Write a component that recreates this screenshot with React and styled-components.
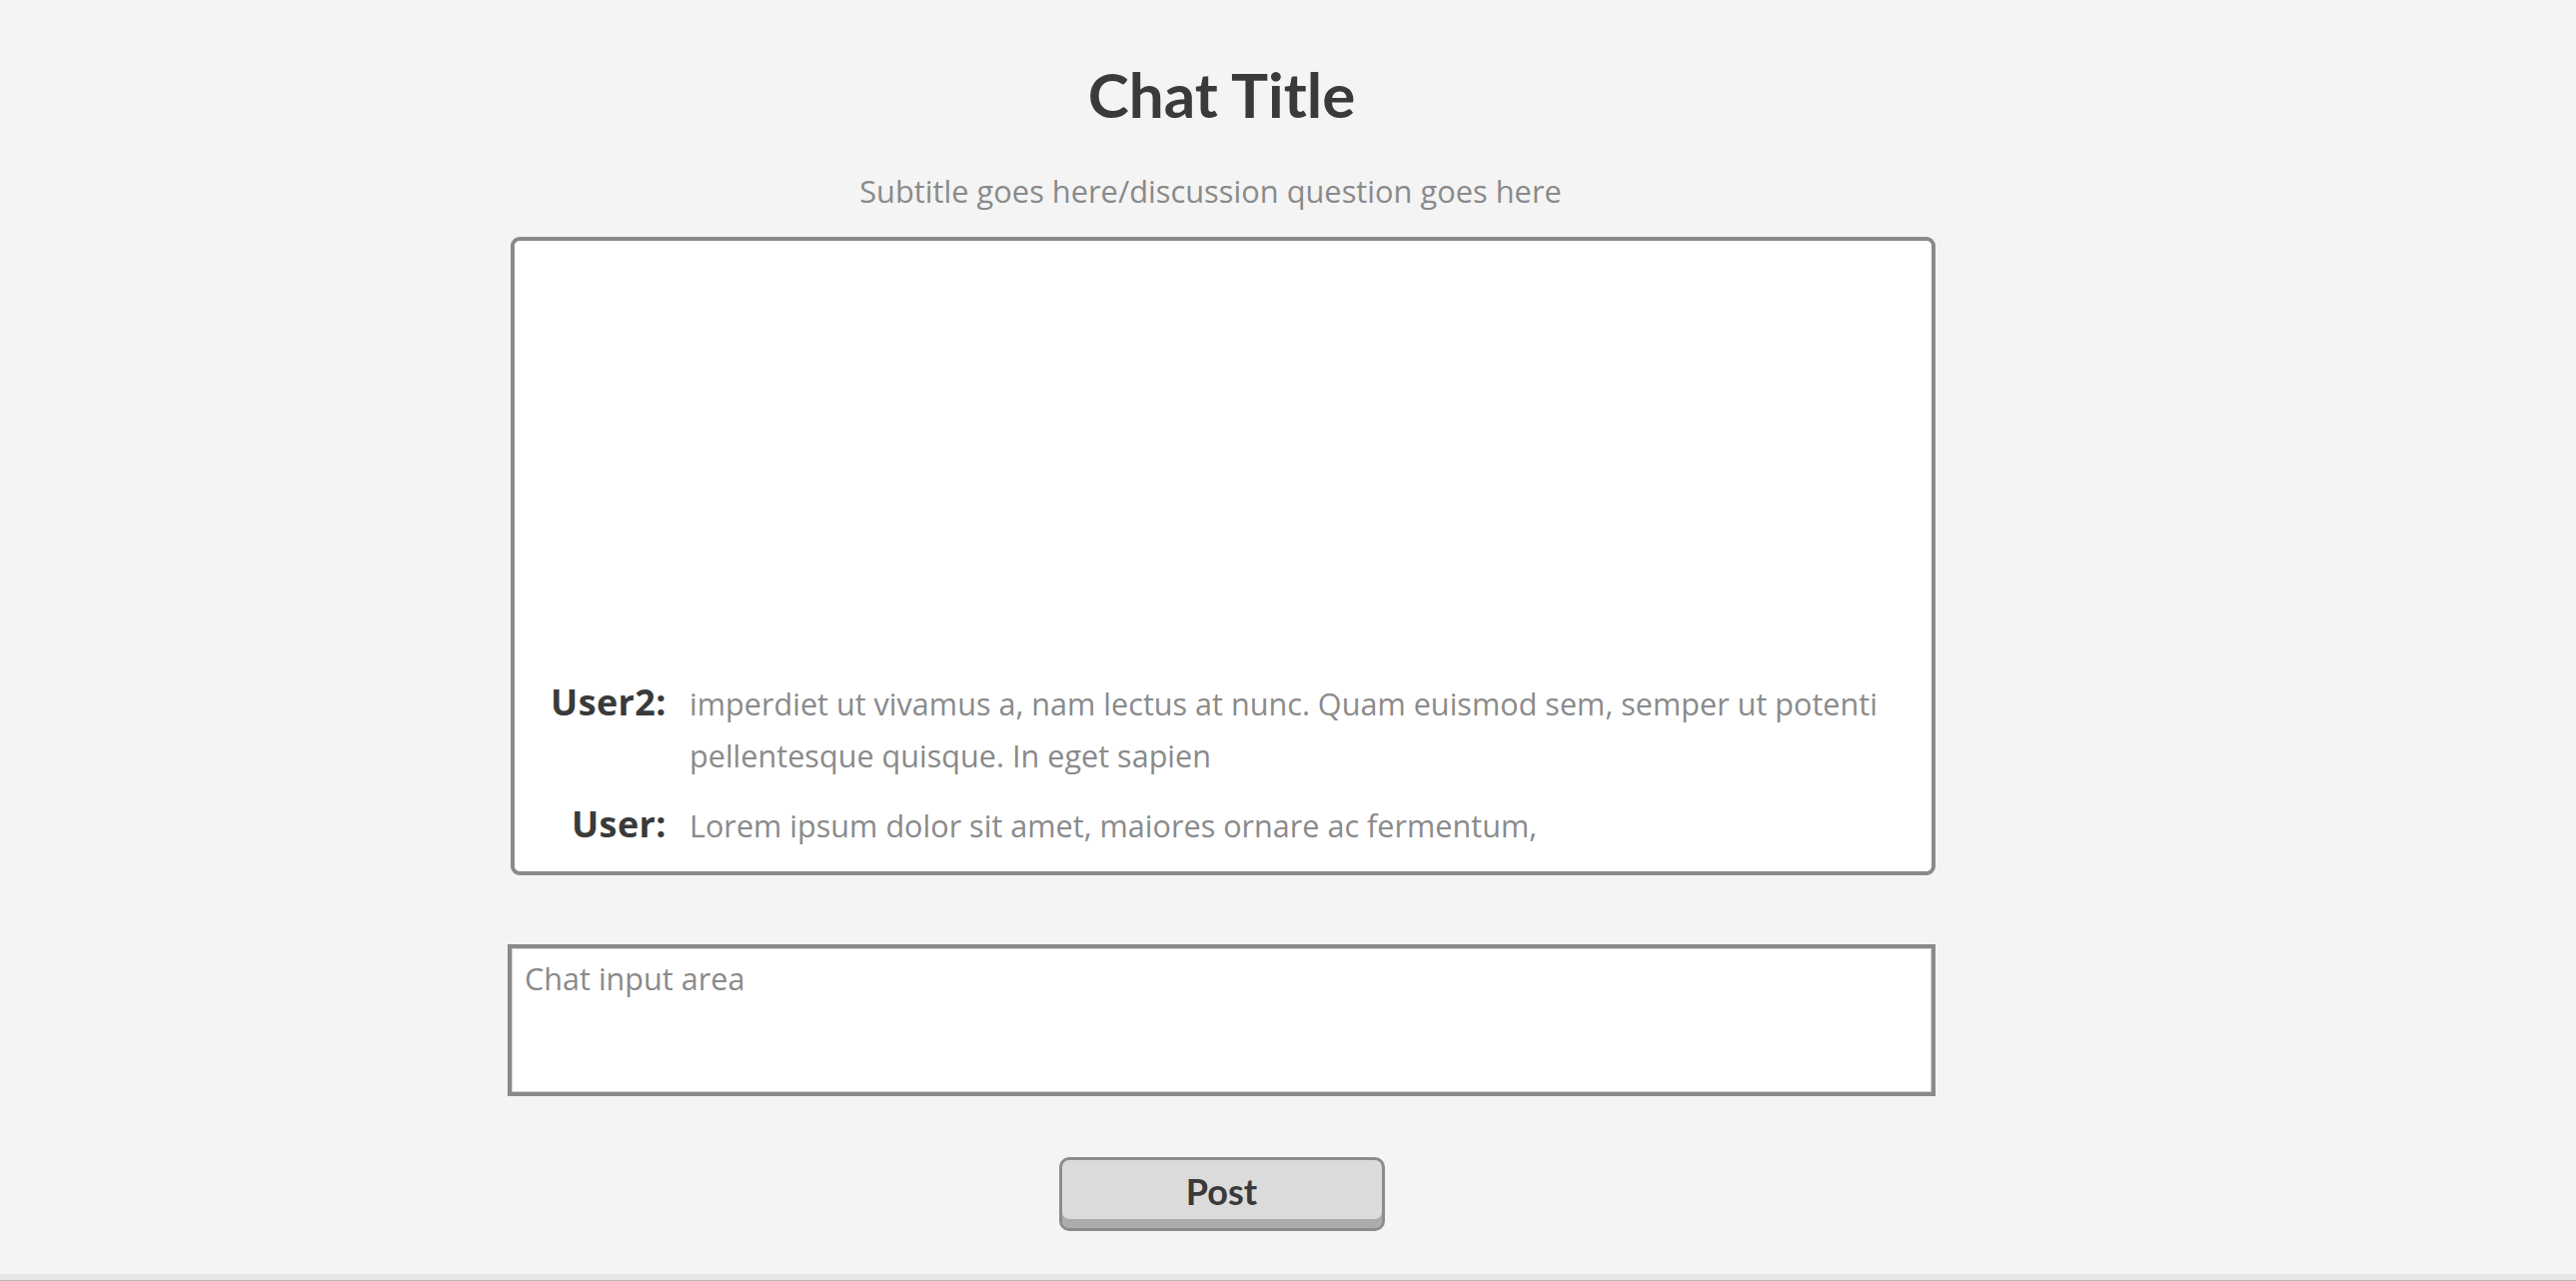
import styled, { createGlobalStyle } from "styled-components";

const GlobalStyle = createGlobalStyle`
    html, body {
        margin: 0;
        padding: 0;
        background: #f4f4f4;
    }
    * {
        box-sizing: border-box;
    }
`;

const bodyFont = `"Open Sans", Lato, sans-serif`;

const Page = styled.div`
    height: 1282px;
    padding: 57px 133px 0 0;
    display: flex;
    flex-direction: column;
    align-items: center;
    font-family: Lato, "Open Sans", sans-serif;
    box-shadow: inset 0 -1px 0 #b8b8b8, inset 0 -7px 0 #e6e6e6;
`;

const Column = styled.div`
    width: 1429px;
    display: flex;
    flex-direction: column;
    align-items: center;
`;

const Title = styled.h1`
    margin: 0;
    font-size: 62px;
    line-height: 74px;
    font-weight: 700;
    color: #3a3a3a;
`;

const Subtitle = styled.p`
    margin: 42px 0 0;
    padding-right: 22px;
    font-family: ${bodyFont};
    font-size: 30.8px;
    line-height: 36px;
    color: #8a8a8a;
`;

const ChatBox = styled.div`
    align-self: flex-end;
    width: 1426px;
    height: 639px;
    margin-top: 28px;
    background: #fff;
    border: 4px solid #8a8a8a;
    border-radius: 9px;
    padding: 0 40px 20px 19px;
    display: flex;
    flex-direction: column;
    justify-content: flex-end;
    gap: 18px;
`;

const Message = styled.div`
    display: grid;
    grid-template-columns: 133px 1fr;
    column-gap: 23px;
    align-items: baseline;
`;

const Author = styled.span`
    text-align: right;
    font-family: ${bodyFont};
    font-size: 36px;
    font-weight: 700;
    letter-spacing: 0.4px;
    color: #3a3a3a;
`;

const Text = styled.span`
    font-family: ${bodyFont};
    font-size: 30.6px;
    line-height: 52px;
    color: #8a8a8a;
`;

const ChatInput = styled.textarea`
    width: 1429px;
    height: 152px;
    margin-top: 69px;
    padding: 12px 13px;
    resize: none;
    background: #fff;
    border: 4px solid #8a8a8a;
    box-shadow: inset 0 0 0 1px #d2d2d2;
    outline: none;
    font-family: ${bodyFont};
    font-size: 30.6px;
    line-height: 36px;
    color: #555;

    &::placeholder {
        color: #8a8a8a;
    }
`;

const PostButton = styled.button`
    width: 326px;
    height: 74px;
    margin-top: 61px;
    background: #dbdbdb;
    border: 3px solid #8c8c8c;
    border-radius: 10px;
    box-shadow: inset 0 -9px 0 #acacac;
    padding: 0 0 6px;
    font-family: Lato, "Open Sans", sans-serif;
    font-size: 36px;
    font-weight: 700;
    color: #3a3a3a;
    cursor: pointer;
`;

const messages = [
    {
        user: "User2:",
        text: "imperdiet ut vivamus a, nam lectus at nunc. Quam euismod sem, semper ut potenti pellentesque quisque. In eget sapien",
    },
    {
        user: "User:",
        text: "Lorem ipsum dolor sit amet, maiores ornare ac fermentum,",
    },
];

function App() {
    return (
        <>
            <GlobalStyle />
            <Page>
                <Column>
                    <Title>Chat Title</Title>
                    <Subtitle>Subtitle goes here/discussion question goes here</Subtitle>
                    {/* CHAT LOG */}
                    <ChatBox>
                        {messages.map((m) => (
                            <Message key={m.user}>
                                <Author>{m.user}</Author>
                                <Text>{m.text}</Text>
                            </Message>
                        ))}
                    </ChatBox>
                    {/* INPUT */}
                    <ChatInput placeholder="Chat input area" />
                    <PostButton>Post</PostButton>
                </Column>
            </Page>
        </>
    );
}

export default App;
